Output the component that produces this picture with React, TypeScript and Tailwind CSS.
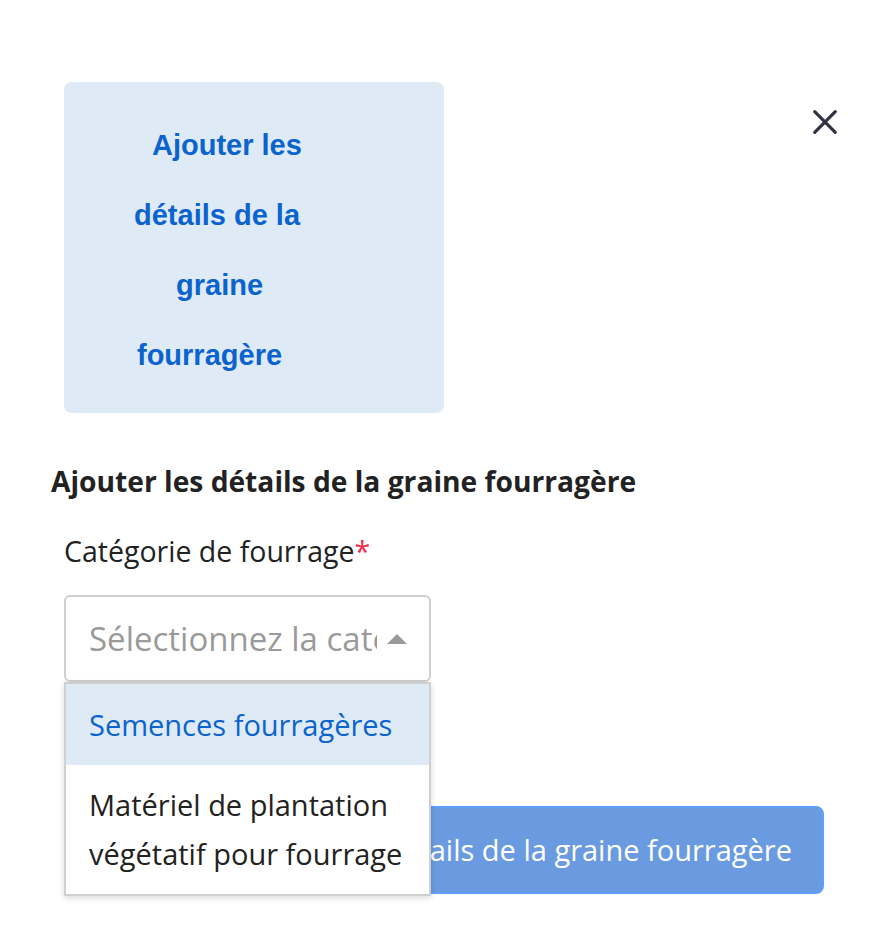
export default function App() {
  return (
    <main className="relative min-h-[932px] w-[889px] bg-white font-['Open_Sans',sans-serif] text-[#222]">
      <button className="absolute left-[806px] top-[103px] text-[#2d3340]" aria-label="Fermer">
        <svg width="38" height="38" viewBox="0 0 24 24" fill="none" stroke="currentColor" strokeWidth="2" strokeLinecap="round">
          <path d="M5.5 5.5l13 13M18.5 5.5l-13 13" />
        </svg>
      </button>

      <div className="pl-[64px] pt-[82px]">
        <div className="w-[380px] rounded-lg bg-[#dfeaf7] pb-[23px] pt-[28px] font-['Liberation_Sans',Arial,sans-serif] text-[29px] font-bold leading-[70px] text-[#0b63ce]">
          <div className="pl-[88px]">Ajouter les</div>
          <div className="pl-[70px]">détails de la</div>
          <div className="pl-[112px]">graine</div>
          <div className="pl-[73px]">fourragère</div>
        </div>
      </div>

      <div className="pl-[51px] pt-[48px]">
        <h2 className="text-[28.2px] font-bold leading-[40px]">Ajouter les détails de la graine fourragère</h2>
      </div>

      <div className="pl-[64px] pr-[64px]">
        <label className="mt-[30px] block text-[28.5px] leading-[40px]">
          Catégorie de fourrage<span className="text-[#f0284a]">*</span>
        </label>

        <div className="relative mt-[24px] w-[367px]">
          <div className="flex h-[87px] items-center rounded-md border-2 border-[#cfcfcf] bg-white pl-[23px] pr-[22px]">
            <span className="min-w-0 flex-1 overflow-hidden whitespace-nowrap text-[33px] text-[#9a9a9a]">
              Sélectionnez la catégorie
            </span>
            <svg width="20" height="10" viewBox="0 0 20 10" className="ml-[10px] shrink-0">
              <path d="M0 10L10 0l10 10z" fill="#9a9a9a" />
            </svg>
          </div>

          <ul className="absolute left-0 top-full z-10 w-[367px] border-2 border-[#d0d0d0] bg-white shadow-[0_2px_6px_rgba(0,0,0,0.15)]">
            <li className="flex h-[81px] items-center bg-[#dfeaf7] pl-[23px] text-[29px] text-[#0b63ce]">
              Semences fourragères
            </li>
            <li className="pb-[16px] pt-[15px] pl-[23px] text-[29px] leading-[49px] text-[#222]">
              Matériel de plantation
              <br />
              végétatif pour fourrage
            </li>
          </ul>
        </div>

        <button className="mt-[124px] flex h-[88px] w-[760px] items-center justify-end rounded-lg border-2 border-[#5f9ff6] bg-[#6a9be0] pr-[30px] text-[29px] text-white">
          Ajouter les détails de la graine fourragère
        </button>
      </div>
    </main>
  );
}
